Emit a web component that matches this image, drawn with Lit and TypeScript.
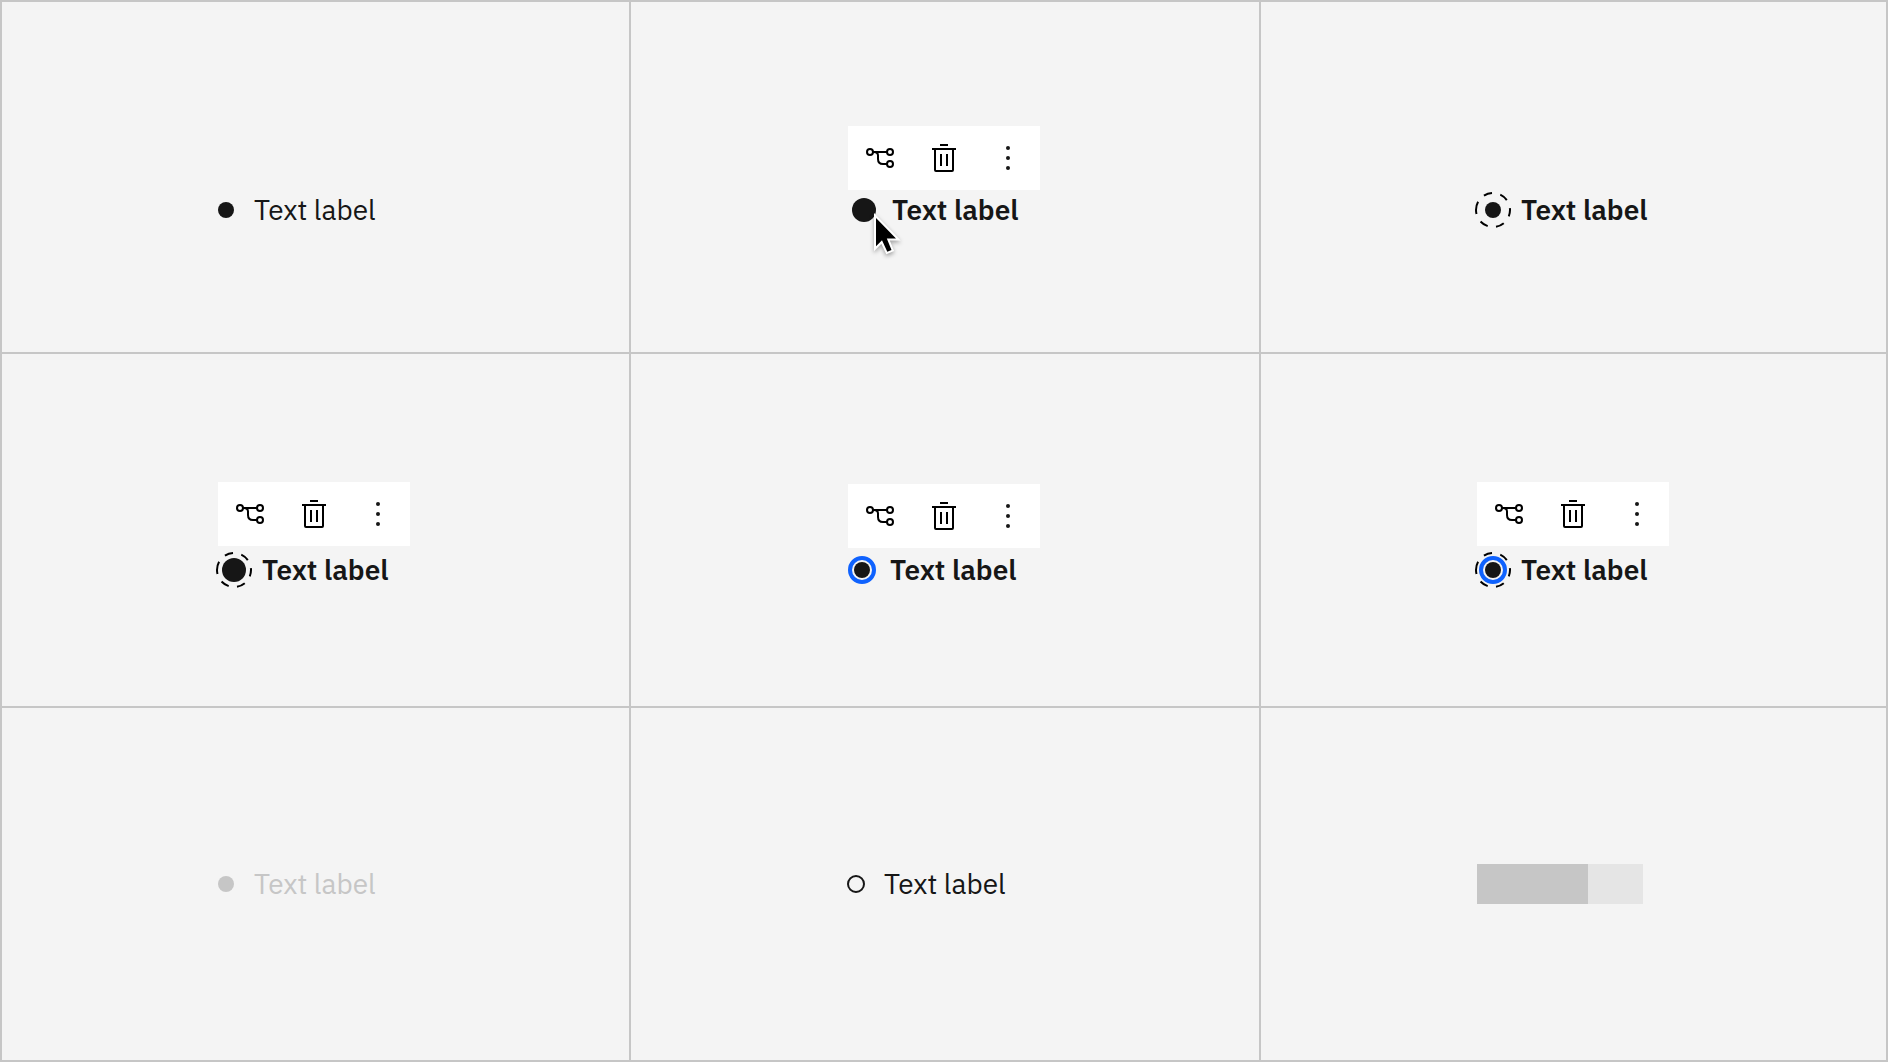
import { LitElement, html, svg, css, nothing } from "lit";
import { customElement, property } from "lit/decorators.js";
import { classMap } from "lit/directives/class-map.js";

type Shape = "small" | "large" | "selected" | "hollow";

interface NodeState {
  row: "first" | "middle" | "last";
  shape?: Shape;
  slot?: "narrow" | "medium" | "wide";
  focus?: boolean;
  strong?: boolean;
  disabled?: boolean;
  tools?: boolean;
  cursor?: boolean;
}

const STATES: NodeState[] = [
  { row: "first", shape: "small", slot: "narrow" },
  { row: "first", shape: "large", slot: "wide", strong: true, tools: true, cursor: true },
  { row: "first", shape: "small", slot: "wide", strong: true, focus: true },
  { row: "middle", shape: "large", slot: "wide", strong: true, focus: true, tools: true },
  { row: "middle", shape: "selected", slot: "medium", strong: true, tools: true },
  { row: "middle", shape: "selected", slot: "wide", strong: true, focus: true, tools: true },
  { row: "last", shape: "small", slot: "narrow", disabled: true },
  { row: "last", shape: "hollow", slot: "narrow" },
  { row: "last" },
];

@customElement("node-toolbar")
export class NodeToolbar extends LitElement {
  static styles = css`
    :host {
      display: flex;
      width: 192px;
      background: #ffffff;
    }
    .tool {
      display: grid;
      place-items: center;
      width: 64px;
      height: 64px;
      margin: 0;
      padding: 0;
      border: 0;
      background: none;
      color: #000000;
    }
    .icon {
      display: block;
      width: 32px;
      height: 32px;
    }
  `;

  render() {
    return html`
      <button class="tool" type="button" aria-label="Branch">
        <svg class="icon" viewBox="0 0 32 32" fill="none" stroke="currentColor" stroke-width="2">
          <circle cx="6" cy="10" r="3" />
          <circle cx="26" cy="10" r="3" />
          <circle cx="26" cy="22" r="3" />
          <path d="M9 10H23M10 10c2.6 0 4 1.2 4 3.5V17c0 3.3 1.7 5 5 5h4" />
        </svg>
      </button>
      <button class="tool" type="button" aria-label="Delete">
        <svg class="icon" viewBox="0 0 32 32" fill="currentColor">
          <path d="M12 12h2v12h-2zM18 12h2v12h-2zM12 2h8v2h-8z" />
          <path d="M4 6V8H6V28a2 2 0 0 0 2 2H24a2 2 0 0 0 2-2V8h2V6ZM8 28V8H24V28Z" />
        </svg>
      </button>
      <button class="tool" type="button" aria-label="More">
        <svg class="icon" viewBox="0 0 32 32" fill="#161616">
          <circle cx="16" cy="6" r="2" />
          <circle cx="16" cy="16" r="2" />
          <circle cx="16" cy="26" r="2" />
        </svg>
      </button>
    `;
  }
}

@customElement("diagram-node")
export class DiagramNode extends LitElement {
  @property({ attribute: false }) state!: NodeState;

  static styles = css`
    :host {
      display: flex;
      align-items: center;
      height: 36px;
      color: #161616;
    }
    .node {
      position: relative;
      display: flex;
      align-items: center;
      gap: 12px;
    }
    .narrow {
      gap: 20px;
    }
    .medium {
      gap: 14px;
    }
    .disabled {
      color: #c6c6c6;
    }
    .mark {
      display: block;
      width: 32px;
      height: 32px;
      overflow: visible;
    }
    .narrow .mark {
      width: 16px;
    }
    .medium .mark {
      width: 28px;
    }
    .text {
      font-family: "IBM Plex Sans", "Noto Sans", sans-serif;
      font-size: 28px;
      line-height: 36px;
      font-weight: 400;
      white-space: nowrap;
    }
    .strong .text {
      font-weight: 600;
    }
    .cursor {
      position: absolute;
      left: 22px;
      top: 17px;
      width: 36px;
      height: 48px;
      overflow: visible;
      filter: drop-shadow(0 2px 2px rgba(0, 0, 0, 0.35));
    }
  `;

  private drawMark({ shape, focus }: NodeState) {
    return svg`
      ${shape === "small" ? svg`<circle r="8" fill="currentColor" />` : nothing}
      ${shape === "large" ? svg`<circle r="12" fill="currentColor" />` : nothing}
      ${shape === "hollow"
        ? svg`<circle r="8" fill="none" stroke="currentColor" stroke-width="2" />`
        : nothing}
      ${focus
        ? svg`<path d="M-17 0A17 17 0 0 1 17 0A17 17 0 0 1 -17 0" fill="none"
            stroke="#000000" stroke-width="2" stroke-dasharray="8.5" />`
        : nothing}
      ${shape === "selected"
        ? svg`<circle r="12" fill="#f4f4f4" stroke="#0f62fe" stroke-width="4" />
            <circle r="8" fill="currentColor" />`
        : nothing}
    `;
  }

  render() {
    const s = this.state;
    const classes = {
      node: true,
      narrow: s.slot === "narrow",
      medium: s.slot === "medium",
      strong: !!s.strong,
      disabled: !!s.disabled,
    };
    const half = s.slot === "narrow" ? 8 : s.slot === "medium" ? 14 : 16;
    return html`
      <div class=${classMap(classes)}>
        <svg class="mark" viewBox="${-half} -16 ${half * 2} 32" aria-hidden="true">
          ${this.drawMark(s)}
        </svg>
        <span class="text">Text label</span>
        ${s.cursor
          ? html`<svg class="cursor" viewBox="0 0 36 48" aria-hidden="true">
              <path
                d="M6 9V37.3L12 31.3L17.3 42.7L21.5 41L16.8 29.5H26Z"
                fill="#000000"
                stroke="#ffffff"
                stroke-width="4"
                paint-order="stroke"
              />
            </svg>`
          : nothing}
      </div>
    `;
  }
}

@customElement("app-root")
export class AppRoot extends LitElement {
  static styles = css`
    :host {
      display: block;
    }
    .board {
      box-sizing: border-box;
      display: grid;
      grid-template-columns: 627fr 628fr 625fr;
      grid-template-rows: 350fr 352fr 352fr;
      gap: 2px;
      min-height: 100vh;
      padding: 2px;
      background: #c6c6c6;
    }
    .cell {
      display: flex;
      flex-direction: column;
      justify-content: center;
      padding-left: round(34.5%, 1px);
      background: #f4f4f4;
    }
    .stage {
      display: flex;
      flex-direction: column;
      justify-content: flex-end;
      gap: 2px;
    }
    .first .stage {
      min-height: 102px;
    }
    .middle {
      padding-top: 10px;
    }
    .middle .stage {
      min-height: 106px;
      gap: 6px;
    }
    .middle.close .stage {
      gap: 4px;
    }
    .skeleton {
      width: 166px;
      height: 40px;
      background: #e5e5e5;
    }
    .fill {
      width: 67%;
      height: 100%;
      background: #c6c6c6;
    }
  `;

  render() {
    return html`
      <main class="board">
        ${STATES.map(
          (s) => html`
            <section
              class=${classMap({ cell: true, [s.row]: true, close: s.slot === "medium" })}
            >
              <div class="stage">
                ${s.tools ? html`<node-toolbar></node-toolbar>` : nothing}
                ${s.shape
                  ? html`<diagram-node .state=${s}></diagram-node>`
                  : html`<div class="skeleton"><div class="fill"></div></div>`}
              </div>
            </section>
          `
        )}
      </main>
    `;
  }
}
